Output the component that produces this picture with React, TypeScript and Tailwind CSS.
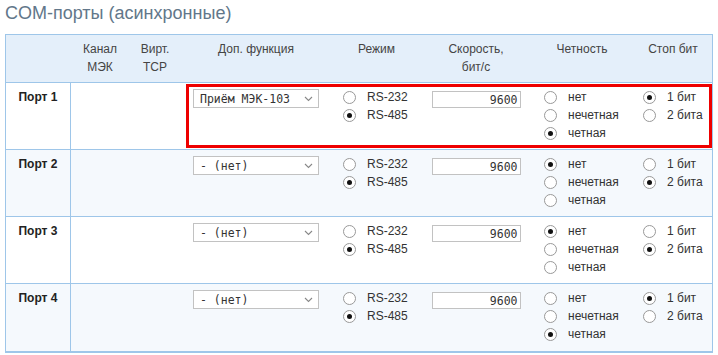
const rows = [
  { port: "Порт 1", fn: "Приём МЭК-103", mode: 1, speed: "9600", parity: 2, stop: 0 },
  { port: "Порт 2", fn: "- (нет)", mode: 1, speed: "9600", parity: 0, stop: 1 },
  { port: "Порт 3", fn: "- (нет)", mode: 1, speed: "9600", parity: 0, stop: 1 },
  { port: "Порт 4", fn: "- (нет)", mode: 1, speed: "9600", parity: 2, stop: 0 },
];

const cols = "grid grid-cols-[65px_58px_52px_150px_91px_108px_104px_78px]";

function Radio({ checked, label }: { checked: boolean; label: string }) {
  return (
    <div className="flex items-center h-[18px]">
      <span className="w-[13px] h-[13px] rounded-full border border-[#999] bg-white flex items-center justify-center mr-[11px] shrink-0">
        {checked && <span className="w-[5px] h-[5px] rounded-full bg-[#111]" />}
      </span>
      <span>{label}</span>
    </div>
  );
}

function Select({ value }: { value: string }) {
  return (
    <div className="w-[126px] h-[19px] mt-[1px] border border-[#c2c2c2] bg-white flex items-center justify-between pl-[6px] pr-[5px] font-['DejaVu_Sans_Mono',monospace] text-[11.5px] text-[#333]">
      <span className="whitespace-pre">{value}</span>
      <svg width="9" height="6" viewBox="0 0 9 6" className="mt-[1px]">
        <path d="M1 1 L4.5 4.5 L8 1" fill="none" stroke="#888" strokeWidth="1.1" />
      </svg>
    </div>
  );
}

export default function App() {
  return (
    <div className="pl-[5px] pt-[3px] font-['Liberation_Sans',Arial,sans-serif] text-[12px] text-[#333] bg-white min-h-[355px]">
      <h2 className="text-[18px] leading-[21px] text-[#62778a]">COM-порты (асинхронные)</h2>
      <div className="relative mt-[10px] w-[708px] border-x border-t border-b-2 border-[#9ec6e9]">
        <div className={`${cols} h-[48px] bg-[#e4effa] border-b border-[#9ec6e9] text-center text-[#444] leading-[18px] pt-[5px]`}>
          <div />
          <div>Канал<br />МЭК</div>
          <div>Вирт.<br />TCP</div>
          <div>Доп. функция</div>
          <div>Режим</div>
          <div>Скорость,<br />бит/с</div>
          <div>Четность</div>
          <div>Стоп бит</div>
        </div>
        {rows.map((r, i) => (
          <div
            key={r.port}
            className={`${cols} h-[67px] leading-[18px] ${i % 2 === 1 ? "bg-[#f5f9fd]" : "bg-white"} ${i < rows.length - 1 ? "border-b border-[#9ec6e9]" : ""}`}
          >
            <div className="border-r border-[#9ec6e9] text-center font-bold text-[#222] pt-[5px]">{r.port}</div>
            <div />
            <div />
            <div className="flex justify-center pt-[5px]">
              <Select value={r.fn} />
            </div>
            <div className="pl-[12px] pt-[5px]">
              <Radio checked={r.mode === 0} label="RS-232" />
              <Radio checked={r.mode === 1} label="RS-485" />
            </div>
            <div className="flex justify-center pt-[8px]">
              <div className="w-[89px] h-[17px] border border-[#c2c2c2] bg-white flex items-center justify-end pr-[2px] font-['DejaVu_Sans_Mono',monospace] text-[11.5px] text-[#333]">
                {r.speed}
              </div>
            </div>
            <div className="pl-[14px] pt-[5px]">
              <Radio checked={r.parity === 0} label="нет" />
              <Radio checked={r.parity === 1} label="нечетная" />
              <Radio checked={r.parity === 2} label="четная" />
            </div>
            <div className="pl-[9px] pt-[5px]">
              <Radio checked={r.stop === 0} label="1 бит" />
              <Radio checked={r.stop === 1} label="2 бита" />
            </div>
          </div>
        ))}
        <div className="absolute left-[180px] top-[49px] w-[526px] h-[64px] border-[3px] border-[#ee0000] pointer-events-none" />
      </div>
    </div>
  );
}
